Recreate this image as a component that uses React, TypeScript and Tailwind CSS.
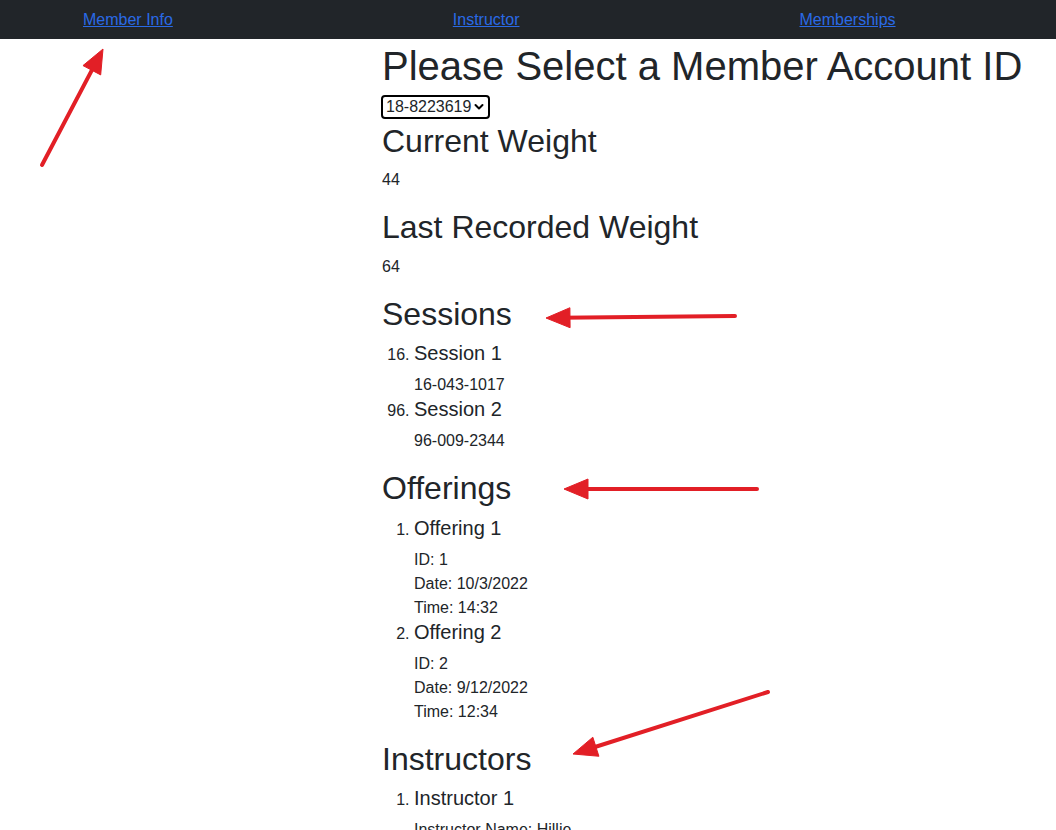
import React from 'react';

const ARROWS = [
  { from: [42, 165], to: [103, 49] },
  { from: [735, 316], to: [546, 318] },
  { from: [757, 489], to: [564, 489] },
  { from: [768, 692], to: [573, 754] },
];

function arrowHead(from: number[], to: number[]) {
  const dx = to[0] - from[0];
  const dy = to[1] - from[1];
  const len = Math.hypot(dx, dy);
  const ux = dx / len;
  const uy = dy / len;
  const bx = to[0] - ux * 24;
  const by = to[1] - uy * 24;
  const half = 10;
  return {
    points: `${to[0]},${to[1]} ${bx - uy * half},${by + ux * half} ${bx + uy * half},${by - ux * half}`,
    base: [to[0] - ux * 14, to[1] - uy * 14],
  };
}

// red annotation arrows drawn over the page
function Arrows() {
  return (
    <svg className="absolute left-0 top-0 pointer-events-none" width="1056" height="830">
      {ARROWS.map((a, i) => {
        const head = arrowHead(a.from, a.to);
        return (
          <g key={i} fill="#e21f26" stroke="#e21f26">
            <line x1={a.from[0]} y1={a.from[1]} x2={head.base[0]} y2={head.base[1]} strokeWidth="4" strokeLinecap="round" />
            <polygon points={head.points} strokeWidth="1" strokeLinejoin="round" />
          </g>
        );
      })}
    </svg>
  );
}

const h2 = 'text-[32px] font-medium leading-[1.2] mb-2';
const h5 = 'text-[20px] font-medium leading-[1.2] mb-2';

export default function App() {
  return (
    <div
      className="relative min-h-screen overflow-hidden bg-white text-[#212529] text-base leading-normal"
      style={{ fontFamily: '"Liberation Sans", Arial, sans-serif' }}
    >
      <nav className="h-[39px] bg-[#212529] flex items-center pl-[83px] gap-[280px]">
        <a href="#" className="text-[#2a6ae6] underline">Member Info</a>
        <a href="#" className="text-[#2a6ae6] underline">Instructor</a>
        <a href="#" className="text-[#2a6ae6] underline">Memberships</a>
      </nav>

      <main className="pl-[382px] pt-[3px]">
        <h1 className="text-[40px] font-medium leading-[1.2] mb-[5px]">Please Select a Member Account ID</h1>
        <div className="relative w-[109px] h-[24px] -ml-px mb-[3px]">
          <select className="appearance-none block w-full h-full border-2 border-black rounded-[4px] text-[16px] leading-none pl-[3px] pr-4 bg-white text-[#212529]">
            <option>18-8223619</option>
          </select>
          <svg className="absolute right-[6px] top-[8px] pointer-events-none" width="10" height="8" viewBox="0 0 10 8">
            <path d="M1.5 2 L5 5.5 L8.5 2" fill="none" stroke="#000" strokeWidth="2" strokeLinecap="round" strokeLinejoin="round" />
          </svg>
        </div>

        <h2 className={h2}>Current Weight</h2>
        <p className="mb-4">44</p>

        <h2 className={h2}>Last Recorded Weight</h2>
        <p className="mb-4">64</p>

        <h2 className={h2}>Sessions</h2>
        <ol className="list-decimal pl-8 mb-4">
          <li value={16}>
            <h5 className={h5}>Session 1</h5>
            <p>16-043-1017</p>
          </li>
          <li value={96}>
            <h5 className={h5}>Session 2</h5>
            <p>96-009-2344</p>
          </li>
        </ol>

        <h2 className={h2}>Offerings</h2>
        <ol className="list-decimal pl-8 mb-4">
          <li>
            <h5 className={h5}>Offering 1</h5>
            <p>ID: 1</p>
            <p>Date: 10/3/2022</p>
            <p>Time: 14:32</p>
          </li>
          <li>
            <h5 className={h5}>Offering 2</h5>
            <p>ID: 2</p>
            <p>Date: 9/12/2022</p>
            <p>Time: 12:34</p>
          </li>
        </ol>

        <h2 className={h2}>Instructors</h2>
        <ol className="list-decimal pl-8 mb-4">
          <li>
            <h5 className={h5}>Instructor 1</h5>
            <p>Instructor Name: Hillie</p>
          </li>
        </ol>
      </main>

      <Arrows />
    </div>
  );
}
